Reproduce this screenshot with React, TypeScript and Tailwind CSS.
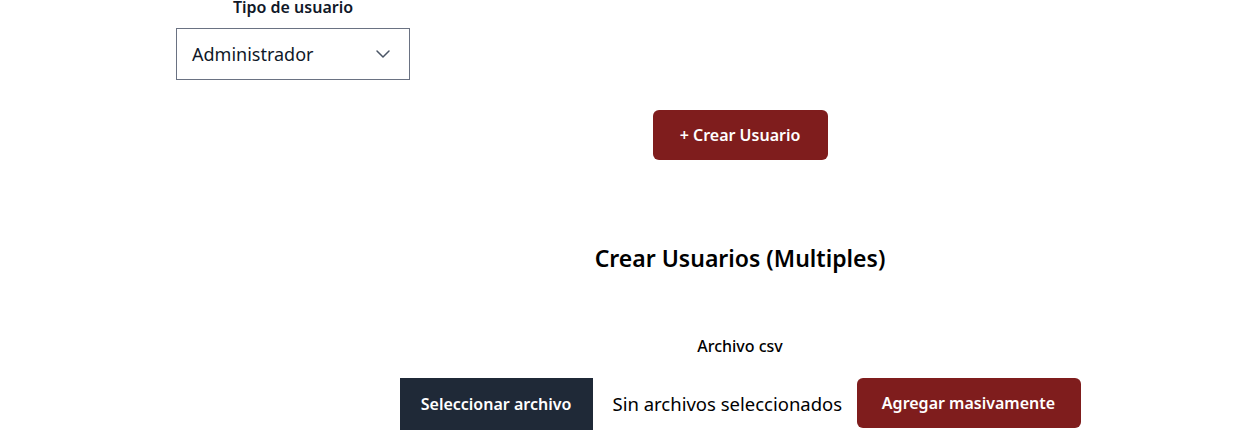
import { ChevronDown } from 'lucide-react';

export default function App() {
  return (
    <div className="min-h-screen bg-white text-black font-['Noto_Sans',sans-serif]">
      <div className="-mt-[5px] ml-[176px] flex w-[234px] flex-col items-center">
        <label className="text-[16px] font-semibold leading-6 text-gray-900">Tipo de usuario</label>
        <div className="mt-[9px] flex h-[52px] w-full items-center justify-between border border-gray-500 pl-[15px] pr-[14px]">
          <span className="pt-[1px] text-[18px] text-gray-900">Administrador</span>
          <ChevronDown size={24} strokeWidth={1.5} className="text-gray-600" />
        </div>
      </div>

      <div className="ml-[233px] flex flex-col items-center">
        <button
          type="button"
          className="mt-[30px] h-[50px] w-[175px] rounded-md bg-[#7f1d1d] text-[16px] font-semibold text-white"
        >
          + Crear Usuario
        </button>

        <h2 className="mt-[82px] text-[23px] font-semibold leading-8">Crear Usuarios (Multiples)</h2>

        <p className="mt-[60px] text-[16px] font-medium leading-6">Archivo csv</p>

        <div className="mt-[20px] flex items-start">
          <div className="flex h-[52px] w-[193px] items-center justify-center bg-[#1f2937] text-[16px] font-semibold text-white">
            Seleccionar archivo
          </div>
          <span className="ml-[20px] mt-[12px] w-[232px] text-[18.5px]">Sin archivos seleccionados</span>
          <button
            type="button"
            className="ml-[12px] h-[50px] w-[224px] rounded-md bg-[#7f1d1d] text-[16px] font-semibold text-white"
          >
            Agregar masivamente
          </button>
        </div>
      </div>
    </div>
  );
}
